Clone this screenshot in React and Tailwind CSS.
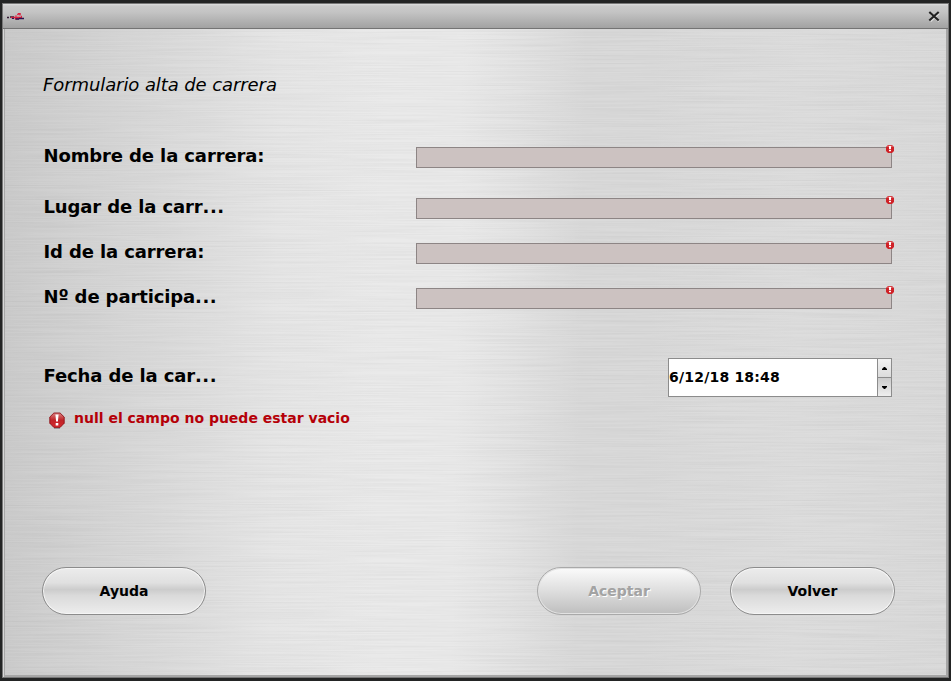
import React from "react";

function BrushedMetal() {
  return (
    <svg className="absolute inset-0 h-full w-full opacity-[0.05]" aria-hidden="true">
      <filter id="brush" x="0" y="0" width="100%" height="100%" colorInterpolationFilters="sRGB">
        <feTurbulence type="fractalNoise" baseFrequency="0.009 0.8" numOctaves="2" seed="4" />
        <feColorMatrix values="1 0.6 0 0 0 1 0.6 0 0 0 1 0.6 0 0 0 0 0 0 0 1" />
      </filter>
      <rect width="100%" height="100%" filter="url(#brush)" />
    </svg>
  );
}

function ErrorBadge() {
  return (
    <svg className="absolute -top-[3px] -right-[3px] h-[8px] w-[8px]" viewBox="0 0 8 8">
      <path d="M2 0H6L8 2V6L6 8H2L0 6V2Z" fill="#cf2127" />
      <path d="M2.2 0.4H5.8L7.2 2H0.8Z" fill="#e0696b" />
      <path d="M3 1H5V4.2H3ZM3 5H5V6.3H3Z" fill="#fff" />
    </svg>
  );
}

function ErrorIcon() {
  return (
    <svg className="h-[17px] w-[16px]" viewBox="0 0 16 17">
      <defs>
        <linearGradient id="stop" x1="0" y1="0" x2="0" y2="1">
          <stop offset="0" stopColor="#db8080" />
          <stop offset="0.5" stopColor="#c02428" />
          <stop offset="1" stopColor="#d5292d" />
        </linearGradient>
      </defs>
      <path d="M5 16.3H11" stroke="#888" strokeWidth="1" />
      <path d="M4.9 1H11.1L15.2 5V11.2L11.1 15.4H4.9L0.8 11.2V5Z" fill="url(#stop)" stroke="#8d1318" strokeWidth="0.9" />
      <path d="M6.4 2.5H9.6L8.9 9.5H7.1ZM6.7 11H9.3V13.4H6.7Z" fill="#fff" />
    </svg>
  );
}

function Label({ text, truncated }) {
  return (
    <label className="relative -top-[2px] left-[-0.5px] text-[18px] leading-[22px] font-bold tracking-[-0.12px] whitespace-nowrap">
      {text}
      {truncated && <span className="tracking-[0.5px]">...</span>}
    </label>
  );
}

function Field({ label, truncated, gap }) {
  return (
    <div className={"flex h-[21px] items-center justify-between " + gap}>
      <Label text={label} truncated={truncated} />
      <div className="relative h-[21px] w-[476px] border border-[#8d8585] bg-[#ccc2c1]">
        <ErrorBadge />
      </div>
    </div>
  );
}

function PillButton({ children, disabled, className }) {
  const look = disabled
    ? "border-[#a9a9a9] bg-linear-to-b from-[#fbfbfb] via-[#dedede] to-[#bebebe] text-[#a3a3a3] [text-shadow:1px_1px_0_#fff] shadow-[inset_0_0_0_1px_#e2e2e2]"
    : "border-[#8c8c8c] bg-[linear-gradient(to_bottom,#ececec_0%,#e0e0e0_32%,#cccccc_47%,#dadada_60%,#ededed_100%)] text-black shadow-[inset_0_0_0_1px_#f5f5f5]";
  return (
    <button disabled={disabled} className={"flex h-[48px] items-center justify-center rounded-full border text-[14px] leading-none font-bold " + look + " " + className}>
      {children}
    </button>
  );
}

export default function App() {
  return (
    <div className="flex h-[681px] w-[951px] flex-col overflow-hidden bg-[#232424] pt-[3px] pr-[2px] pb-[3px] pl-[2px] font-['DejaVu_Sans',sans-serif] text-black">
      <div className="flex flex-1 flex-col border border-[#777] bg-[#a6a6a6] shadow-[inset_1px_1px_0_#d8d8d8]">
        <header className="flex h-[25px] items-center justify-between border-b border-[#747474] bg-[linear-gradient(to_bottom,#dedede_0px,#cacaca_2px,#c4c4c4_8px,#a2a2a2_24px)] pr-[8px] pl-[4px]">
          <svg className="h-[7px] w-[17px]" viewBox="0 0 17 7">
            <path d="M0 4.5H2M3 4H7" stroke="#351b34" strokeWidth="1.6" />
            <path d="M4 4.5H15M9 3.5V2.5M8 5.7H12M10.5 2L11.5 0.8H13V2.5M14 3.5H15" fill="none" stroke="#e0203f" strokeWidth="1.5" />
            <path d="M5 5.4H7M8.5 6H12M12 5.5H17" stroke="#2c144f" strokeWidth="1.3" />
          </svg>
          <svg className="h-[11px] w-[12px]" viewBox="0 0 12 11">
            <path d="M2.4 2.2L11 10.2M11 2.2L2.4 10.2" stroke="#e2e2e2" strokeWidth="2" />
            <path d="M1.3 1L10.7 9.6M10.7 1L1.3 9.6" stroke="#222" strokeWidth="2.1" />
          </svg>
        </header>
        <main className="relative mr-[2px] mb-[2px] ml-[2px] flex-1 bg-[linear-gradient(91deg,#c9c9c9_0%,#d0d0d0_7%,#dadada_18%,#e5e5e5_29%,#e9e9e9_40%,#e9e9e9_48%,#e2e2e2_54%,#d8d8d8_61%,#d8d8d8_68%,#dcdcdc_84%,#d8d8d8_100%)]">
          <BrushedMetal />
          <div className="relative flex flex-col pt-[44px] pr-[52px] pl-[38px]">
            <h1 className="h-[24px] text-[18px] leading-[24px] font-normal tracking-[-0.09px] whitespace-nowrap italic">Formulario alta de carrera</h1>
            <form className="flex flex-col pr-[2px] pl-px">
              <Field label="Nombre de la carrera:" gap="mt-[50px]" />
              <Field label="Lugar de la carr" truncated gap="mt-[30px]" />
              <Field label="Id de la carrera:" gap="mt-[24px]" />
              <Field label="Nº de participa" truncated gap="mt-[24px]" />
              <div className="mt-[49px] flex h-[39px] items-center justify-between">
                <Label text="Fecha de la car" truncated />
                <div className="flex h-[39px] w-[224px] border border-[#8c8c8c] bg-white">
                  <span className="flex flex-1 items-center pb-[2px] text-[14px] leading-none font-bold tracking-[0.2px]">6/12/18 18:48</span>
                  <div className="flex w-[14px] flex-col border-l border-[#8c8c8c]">
                    <div className="flex h-[19px] items-center justify-center border-b border-[#8c8c8c] bg-linear-to-b from-[#f2f2f2] to-[#dcdcdc]">
                      <svg className="h-[3px] w-[5px]" viewBox="0 0 5 3"><path d="M0 3V2L2 0H3L5 2V3Z" /></svg>
                    </div>
                    <div className="flex flex-1 items-center justify-center bg-linear-to-b from-[#cccccc] to-[#eeeeee]">
                      <svg className="h-[3px] w-[5px]" viewBox="0 0 5 3"><path d="M0 0V1L2 3H3L5 1V0Z" /></svg>
                    </div>
                  </div>
                </div>
              </div>
            </form>
            <div className="mt-[12px] flex h-[20px] items-end gap-[9.5px] pl-[5.5px]">
              <ErrorIcon />
              <span className="pb-[1px] text-[14px] leading-[20px] font-bold whitespace-nowrap text-[#b50008]">null el campo no puede estar vacio</span>
            </div>
            <div className="-mr-px mt-[138px] flex">
              <PillButton className="-ml-px w-[164px]">Ayuda</PillButton>
              <PillButton disabled className="ml-auto w-[164px]">Aceptar</PillButton>
              <PillButton className="ml-[29px] w-[165px]">Volver</PillButton>
            </div>
          </div>
        </main>
      </div>
    </div>
  );
}
